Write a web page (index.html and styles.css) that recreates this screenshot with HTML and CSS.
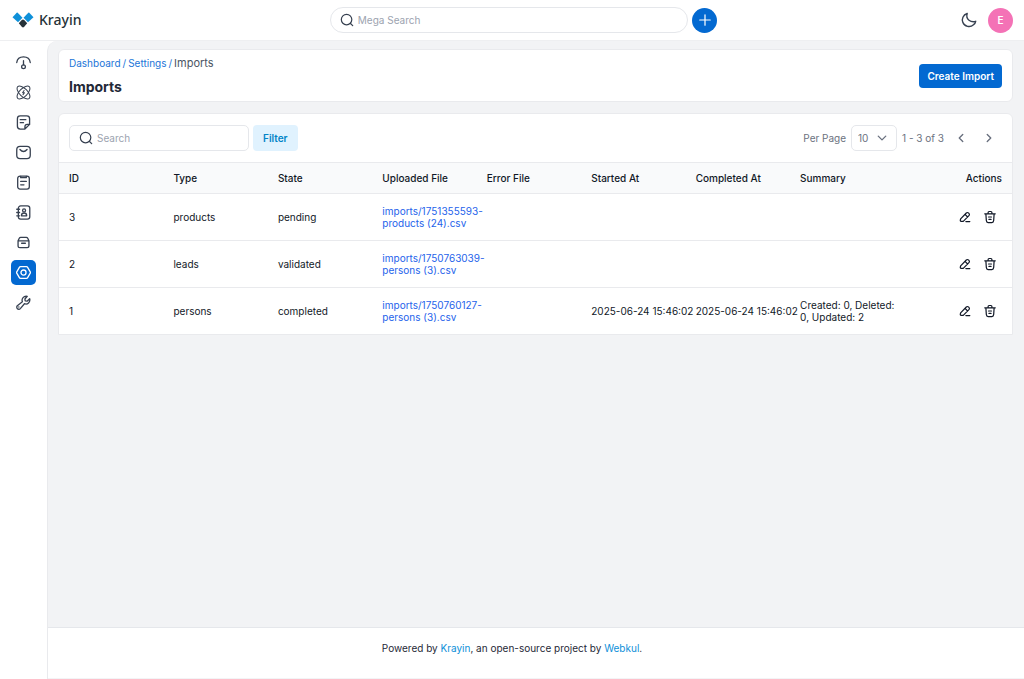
FILE: index.html
```html
<!DOCTYPE html>
<html lang="en">

<head>
  <meta charset="UTF-8" />
  <meta name="viewport" content="width=device-width, initial-scale=1.0" />
  <title>Imports</title>
  <link rel="stylesheet" href="styles.css">
</head>

<body>

  <!-- Shared icons -->
  <svg class="sprite" aria-hidden="true">
    <symbol id="icon-search" viewBox="0 0 16 16"><circle cx="7.5" cy="7.5" r="6" /><path d="M12 12l2.500 2.500" /></symbol>
    <symbol id="icon-edit" viewBox="0 0 16 16"><path d="M3 10.200L9.500 3.400a1.700 1.700 0 0 1 2.500 0l.5.5a1.700 1.700 0 0 1 0 2.500L6 13H3.500A1 1 0 0 1 2.600 12zM8 5l3 3M9 13.200h4.500" /></symbol>
    <symbol id="icon-delete" viewBox="0 0 16 16"><path d="M2 4.300h12M5.800 4V3q0-1.300 1.200-1.300h2q1.200 0 1.200 1.300v1M3.300 4.500l.5 7.500q.2 2.300 2 2.300h4.400q1.800 0 2-2.300l.5-7.500M6.300 8h3.400M6.800 10.800h2.400" /></symbol>
  </svg>

  <header class="header">
    <a href="#" class="logo">
      <svg viewBox="0 0 22 16" aria-hidden="true">
        <path d="M.5 5.200L4.700.8q.5-.5 1 0L10.500 5.800 6 10.300z" fill="#0e90d9" />
        <path d="M21.500 5.200L17.300.8q-.5-.5-1 0L11.500 5.800 16 10.300z" fill="#0e90d9" />
        <path d="M11 7.500q.7 0 1.200.5l3 3.200L12 15q-1 .9-2 0L6.800 11.200l3-3.200q.5-.5 1.200-.5z" fill="#263238" />
      </svg>
      <span>Krayin</span>
    </a>

    <div class="mega">
      <label class="search-box mega-search">
        <svg class="icon" aria-hidden="true"><use href="#icon-search" /></svg>
        <input type="text" placeholder="Mega Search" aria-label="Mega Search">
      </label>
      <button class="add-btn" aria-label="Add">
        <svg class="icon" viewBox="0 0 16 16" aria-hidden="true"><path d="M8 2v12M2 8h12" /></svg>
      </button>
    </div>

    <div class="account">
      <button class="icon-btn" aria-label="Dark mode">
        <svg class="icon" viewBox="0 0 16 16" aria-hidden="true"><path d="M6.200 1.500C2 3 .5 7 1.800 10.200c1.700 4.500 7.300 5.600 10.700 2.600 1.300-1.100 2-2.300 2.200-3.500-4.500 1.500-10.500-1.800-8.500-7.800z" /></svg>
      </button>
      <button class="avatar">E</button>
    </div>
  </header>

  <div class="layout">
    <nav class="sidebar">
      <a href="#" aria-label="Dashboard">
        <svg class="icon" viewBox="0 0 16 16"><path d="M.8 8C1.800 0 14.200 0 15.200 8M8 6v4.500" /><circle cx="8" cy="12.500" r="2" /></svg>
      </a>
      <a href="#" aria-label="Leads">
        <svg class="icon thin" viewBox="0 0 16 16"><ellipse cx="8" cy="8" rx="8.700" ry="4.200" transform="rotate(45 8 8)" /><ellipse cx="8" cy="8" rx="8.700" ry="4.200" transform="rotate(-45 8 8)" /><path d="M8.600 5.800L7 8.200h2L7.500 10.300" /></svg>
      </a>
      <a href="#" aria-label="Quotes">
        <svg class="icon" viewBox="0 0 16 16"><path d="M9.500 15H4.500q-3 0-3-3V4q0-3 3-3h7q3 0 3 3v6zM9.500 15v-2.500q0-2.500 2.500-2.500h2.500M4.500 5h6M4.500 8.200h3.500" /></svg>
      </a>
      <a href="#" aria-label="Mail">
        <svg class="icon" viewBox="0 0 16 16"><rect x=".8" y="1.500" width="14.400" height="13" rx="3.500" /><path d="M4.200 4.800Q8 9 11.800 4.800" /></svg>
      </a>
      <a href="#" aria-label="Activities">
        <svg class="icon" viewBox="0 0 16 16"><rect x="1.800" y="1.200" width="12.400" height="13.800" rx="2.500" /><path d="M5 1.500v1.300h6V1.500M5 6.800h6M5 10.500h3.500" /></svg>
      </a>
      <a href="#" aria-label="Contacts">
        <svg class="icon" viewBox="0 0 16 16"><rect x="2.500" y="1" width="12.200" height="14" rx="2.500" /><circle cx="8.600" cy="5.800" r="1.600" /><path d="M5.800 11.500q0-3 2.800-3t2.800 3zM.8 4.500h3M.8 8h3M.8 11.500h3" /></svg>
      </a>
      <a href="#" aria-label="Products">
        <svg class="icon" viewBox="0 0 16 16"><path d="M2.200 6.200L3.500 3.500Q4 2.500 5 2.500h6q1 0 1.500 1l1.300 2.700v5.300q0 2-2 2H4.200q-2 0-2-2zM2.200 6.200h11.600M6 8.800h4" /></svg>
      </a>
      <a href="#" class="active" aria-label="Settings">
        <svg class="icon" viewBox="0 0 16 16"><path d="M4.800 1.800h6.400q.8 0 1.200.7l2.800 4.800q.4.700 0 1.400l-2.800 4.800q-.4.700-1.200.7H4.800q-.8 0-1.200-.7L.8 8.700q-.4-.7 0-1.400l2.800-4.800q.4-.7 1.200-.7z" /><circle cx="8" cy="8" r="2.700" /></svg>
      </a>
      <a href="#" aria-label="Configuration">
        <svg class="icon" viewBox="0 0 16 16"><path d="M6.800 7.200C5.600 3.800 8.200.7 12 1.500L9.500 4.200l.3 2 2 .4 2.800-2.600c.9 3.600-2.300 6.600-5.600 5.300L4.600 14.500a2 2 0 0 1-3.200-3z" /><path d="M3 12.800h.1" /></svg>
      </a>
    </nav>

    <div class="page">
      <main class="content">

        <div class="card page-head">
          <div>
            <div class="breadcrumb">
              <a href="#">Dashboard</a><i>/</i><a href="#">Settings</a><i>/</i><span>Imports</span>
            </div>
            <h1>Imports</h1>
          </div>
          <button class="primary-btn">Create Import</button>
        </div>

        <div class="card datagrid">
          <div class="toolbar">
            <div class="tools">
              <label class="search-box">
                <svg class="icon" aria-hidden="true"><use href="#icon-search" /></svg>
                <input type="text" placeholder="Search" aria-label="Search">
              </label>
              <button class="filter-btn">Filter</button>
            </div>
            <div class="pager">
              <label for="perPage">Per Page</label>
              <div class="select">
                <select id="perPage">
                  <option>10</option>
                  <option>20</option>
                  <option>50</option>
                </select>
                <svg class="icon" viewBox="0 0 16 16" aria-hidden="true"><path d="M3 5.500l5 5 5-5" /></svg>
              </div>
              <span>1 - 3 of 3</span>
              <div class="arrows">
                <button class="icon-btn" aria-label="Previous page"><svg class="icon" viewBox="0 0 16 16"><path d="M10 4L6 8l4 4" /></svg></button>
                <button class="icon-btn" aria-label="Next page"><svg class="icon" viewBox="0 0 16 16"><path d="M6 4l4 4-4 4" /></svg></button>
              </div>
            </div>
          </div>

          <table>
            <thead>
              <tr>
                <th>ID</th>
                <th>Type</th>
                <th>State</th>
                <th>Uploaded File</th>
                <th>Error File</th>
                <th>Started At</th>
                <th>Completed At</th>
                <th>Summary</th>
                <th class="actions">Actions</th>
              </tr>
            </thead>
            <tbody>
              <tr>
                <td>3</td>
                <td>products</td>
                <td>pending</td>
                <td><a href="#">imports/1751355593-products (24).csv</a></td>
                <td></td>
                <td></td>
                <td></td>
                <td></td>
                <td class="actions">
                  <button class="icon-btn" aria-label="Edit"><svg class="icon"><use href="#icon-edit" /></svg></button>
                  <button class="icon-btn" aria-label="Delete"><svg class="icon"><use href="#icon-delete" /></svg></button>
                </td>
              </tr>
              <tr>
                <td>2</td>
                <td>leads</td>
                <td>validated</td>
                <td><a href="#">imports/1750763039-persons (3).csv</a></td>
                <td></td>
                <td></td>
                <td></td>
                <td></td>
                <td class="actions">
                  <button class="icon-btn" aria-label="Edit"><svg class="icon"><use href="#icon-edit" /></svg></button>
                  <button class="icon-btn" aria-label="Delete"><svg class="icon"><use href="#icon-delete" /></svg></button>
                </td>
              </tr>
              <tr>
                <td>1</td>
                <td>persons</td>
                <td>completed</td>
                <td><a href="#">imports/1750760127-persons (3).csv</a></td>
                <td></td>
                <td class="date">2025-06-24 15:46:02</td>
                <td class="date">2025-06-24 15:46:02</td>
                <td>Created: 0, Deleted: 0, Updated: 2</td>
                <td class="actions">
                  <button class="icon-btn" aria-label="Edit"><svg class="icon"><use href="#icon-edit" /></svg></button>
                  <button class="icon-btn" aria-label="Delete"><svg class="icon"><use href="#icon-delete" /></svg></button>
                </td>
              </tr>
            </tbody>
          </table>
        </div>

      </main>

      <footer class="footer">
        <p>Powered by <a href="#">Krayin</a>, an open-source project by <a href="#">Webkul</a>.</p>
      </footer>
    </div>
  </div>

</body>

</html>
```

FILE: styles.css
```css
* {
  margin: 0;
  padding: 0;
  box-sizing: border-box;
}

body {
  min-height: 100vh;
  display: flex;
  flex-direction: column;
  font-family: Inter, sans-serif;
  font-size: 10px;
  line-height: 12px;
  color: #1f2937;
  background-color: #fff;
}

a {
  text-decoration: none;
}

button,
input,
select {
  font: inherit;
  color: inherit;
  border: none;
  background: none;
  outline: none;
}

button {
  cursor: pointer;
}

.sprite {
  position: absolute;
  width: 0;
  height: 0;
}

.icon {
  display: block;
  flex: none;
  width: 14px;
  height: 14px;
  fill: none;
  stroke: currentColor;
  stroke-width: 1.4;
  stroke-linecap: round;
  stroke-linejoin: round;
}

.icon.thin {
  stroke-width: 1.1;
}

.icon-btn {
  display: flex;
}

/* Header */
.header {
  display: flex;
  justify-content: space-between;
  align-items: center;
  height: 41px;
  padding: 0 11px 0 12px;
  border-bottom: 1px solid #eeeff1;
}

.logo {
  display: flex;
  align-items: center;
  gap: 5px;
  width: 74px;
  font-family: "Noto Sans", sans-serif;
  font-size: 14px;
  line-height: 16px;
  font-weight: 500;
  color: #263238;
}

.logo svg {
  width: 22px;
  height: 16px;
}

.mega {
  display: flex;
  align-items: center;
  gap: 4px;
}

.search-box {
  display: flex;
  align-items: center;
  gap: 4px;
  width: 180px;
  height: 26px;
  padding: 0 9px;
  border: 1px solid #e5e7eb;
  border-radius: 5px;
  color: #374151;
}

.search-box input {
  flex: 1;
  min-width: 0;
}

.search-box input::placeholder {
  color: #9ca3af;
}

.mega-search {
  width: 35vw;
  border-radius: 13px;
}

.add-btn {
  display: flex;
  align-items: center;
  justify-content: center;
  width: 25px;
  height: 25px;
  border-radius: 50%;
  background-color: #0369d1;
  color: #fff;
}

.account {
  display: flex;
  align-items: center;
  gap: 11px;
  color: #374151;
}

.account .icon {
  width: 16px;
  height: 16px;
}

.avatar {
  width: 25px;
  height: 25px;
  border-radius: 50%;
  background-color: #f472b6;
  color: #fff;
  font-weight: 600;
}

/* Sidebar */
.layout {
  flex: 1;
  display: flex;
}

.sidebar {
  display: flex;
  flex-direction: column;
  gap: 5px;
  padding: 9px 11px;
}

.sidebar a {
  display: flex;
  align-items: center;
  justify-content: center;
  width: 25px;
  height: 25px;
  border-radius: 5px;
  color: #374151;
}

.sidebar .icon {
  width: 15px;
  height: 15px;
}

.sidebar a.active {
  background-color: #0369d1;
  color: #fff;
}

/* Page */
.page {
  flex: 1;
  min-width: 0;
  display: flex;
  flex-direction: column;
  border-left: 1px solid #e9eaed;
  border-top-left-radius: 10px;
  background-color: #f2f3f5;
  overflow: hidden;
}

.content {
  flex: 1;
  display: flex;
  flex-direction: column;
  gap: 11px;
  padding: 8px 11px 11px 10px;
}

.card {
  border: 1px solid #e9eaed;
  border-radius: 6px;
  background-color: #fff;
}

.page-head {
  display: flex;
  align-items: center;
  justify-content: space-between;
  height: 53px;
  padding: 0 10px;
}

.breadcrumb {
  display: flex;
  gap: 2px;
  margin-bottom: 9px;
  color: #4b5563;
}

.breadcrumb a,
.breadcrumb i {
  font-style: normal;
  color: #1b75d8;
}

.breadcrumb span {
  font-size: 11px;
}

h1 {
  font-size: 14px;
  line-height: 17px;
  font-weight: 700;
}

.primary-btn {
  height: 24px;
  padding: 0 8px;
  border-radius: 4px;
  background-color: #0369d1;
  color: #fff;
  font-weight: 600;
}

.datagrid {
  border-bottom-left-radius: 0;
  border-bottom-right-radius: 0;
}

.toolbar {
  display: flex;
  align-items: center;
  justify-content: space-between;
  height: 48px;
  padding: 0 10px;
}

.tools {
  display: flex;
  align-items: center;
  gap: 4px;
}

.filter-btn {
  height: 26px;
  padding: 0 10px;
  border-radius: 4px;
  background-color: #e0f2fe;
  color: #0284c7;
  font-weight: 600;
}

.pager {
  display: flex;
  align-items: center;
  gap: 5px;
  color: #6b7280;
}

.select {
  display: flex;
  align-items: center;
  width: 46px;
  height: 26px;
  border: 1px solid #e5e7eb;
  border-radius: 5px;
}

.select select {
  flex: 1;
  align-self: stretch;
  appearance: none;
  margin-right: -24px;
  padding: 0 24px 0 6px;
}

.select .icon {
  width: 12px;
  height: 12px;
  margin-right: 8px;
  stroke-width: 1.8;
  pointer-events: none;
}

.arrows {
  display: flex;
  gap: 14px;
  padding: 0 6px 0 5px;
}

.arrows .icon {
  stroke-width: 1.6;
}

/* Table */
table,
thead,
tbody {
  display: block;
}

tr {
  display: grid;
  grid-template-columns: repeat(9, minmax(0, 1fr));
  gap: 7px;
  align-items: center;
  height: 47px;
  padding: 0 10px;
  border-top: 1px solid #e9eaed;
  color: #111827;
}

thead tr {
  height: 31px;
  background-color: #f9fafb;
}

th {
  font-weight: 500;
  text-align: left;
}

td a {
  color: #2563eb;
}

.date {
  white-space: nowrap;
}

th.actions {
  text-align: right;
}

td.actions {
  display: flex;
  justify-content: flex-end;
  gap: 11px;
  padding-right: 5px;
}

/* Footer, centred on the window rather than on the page column */
.footer {
  height: 52px;
  padding: 14px 48px 0 0;
  border-top: 1px solid #e5e7eb;
  border-bottom: 1px solid #f3f4f6;
  background-color: #fff;
  text-align: center;
}

.footer a {
  color: #0e90d9;
}
```
